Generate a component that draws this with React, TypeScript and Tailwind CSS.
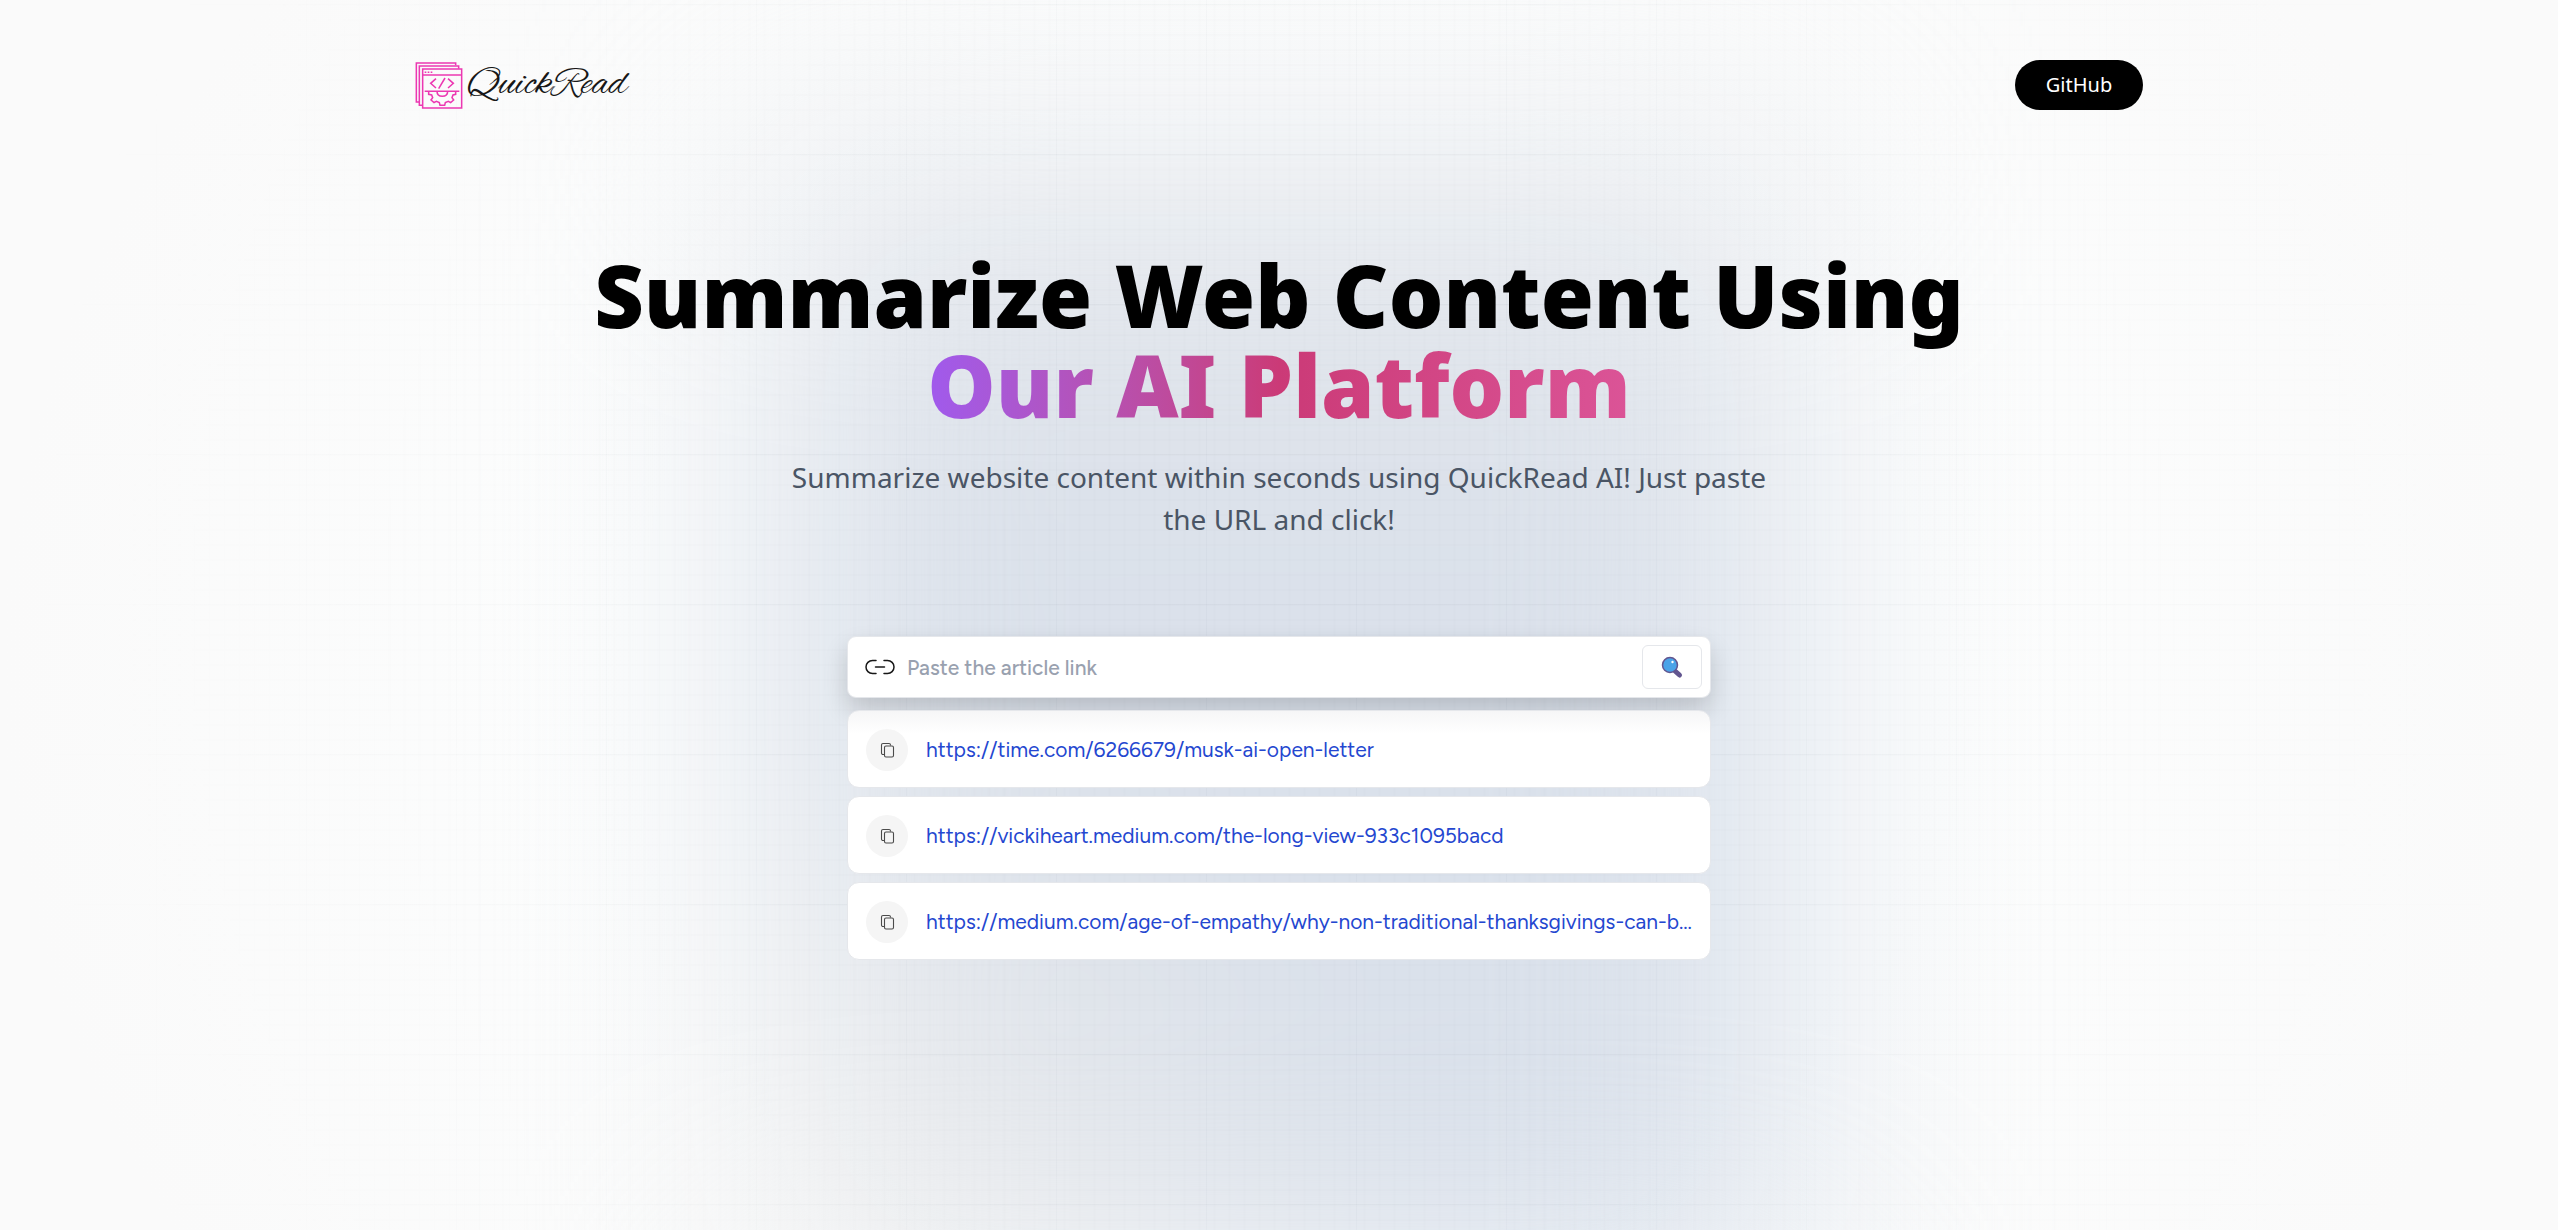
const links = [
  "https://time.com/6266679/musk-ai-open-letter",
  "https://vickiheart.medium.com/the-long-view-933c1095bacd",
  "https://medium.com/age-of-empathy/why-non-traditional-thanksgivings-can-be-better",
];

function LogoMark() {
  return (
    <svg viewBox="14 19 144 141" className="h-[47px] w-12" fill="none" stroke="#ec38b2" strokeWidth="4.6" aria-hidden="true">
      <path d="M28 139H18V22h118v7" />
      <path d="M37 149H27V31h118v8" />
      <path d="M37 40h117v117H37z" />
      <path d="M37 58h117" />
      <path d="M43 49.500h5M52 49.500h5M61 49.500h5" />
      <path d="M77 69 61 83l16 14M104 67 85 99M113 69l16 14-16 14" />
      <path d="M43 107h104" />
      <path d="M80 107c0 10 7 15 16 15s16-5 16-15" />
      <path d="M55 108v8l9 2 3 8-5 7 9 8 7-4 9 4 2 8h14l2-8 9-4 7 4 9-8-5-7 3-8 8-2v-8" />
    </svg>
  );
}

function LinkIcon() {
  return (
    <svg viewBox="0 0 30 16" className="h-4 w-[30px] shrink-0" fill="none" stroke="#171717" strokeWidth="1.500" strokeLinecap="round" aria-hidden="true">
      <path d="M11 1.500H7.500a6.500 6.500 0 0 0 0 13H11M19 1.500h3.500a6.500 6.500 0 0 1 0 13H19M10.500 8h9" />
    </svg>
  );
}

function CopyIcon() {
  return (
    <svg viewBox="0 0 16 16" className="size-4" fill="none" stroke="#4b4b4b" strokeWidth="1.100" strokeLinejoin="round" aria-hidden="true">
      <rect x="5.500" y="4" width="9" height="11" rx="1.500" />
      <path d="M5 12.500H4A1.500 1.500 0 0 1 2.500 11V3A1.500 1.500 0 0 1 4 1.500h6A1.500 1.500 0 0 1 11.500 3v.5" />
    </svg>
  );
}

function SearchIcon() {
  return (
    <svg viewBox="0 0 24 24" className="size-6" aria-hidden="true">
      <path d="m15 16 4.500 4" stroke="#62558f" strokeWidth="5" strokeLinecap="round" />
      <circle cx="10" cy="10" r="7.500" fill="#4aa3e8" stroke="#62558f" strokeWidth="1.500" />
      <circle cx="12.500" cy="7" r="1.200" fill="#fff" />
    </svg>
  );
}

function Backdrop() {
  return (
    <div className="pointer-events-none absolute inset-0 overflow-hidden" aria-hidden="true">
      <div className="absolute inset-0 bg-[radial-gradient(ellipse_50%_90%_at_50%_55%,#fcfdfd_50%,#fafafa_100%)]" />
      <div className="absolute inset-x-0 top-40 -bottom-20 mx-auto w-2/5 bg-[radial-gradient(circle_at_5%_95%,#eeeeee_0%,transparent_40%),linear-gradient(to_bottom,#e4e7ec,#dae1eb_40%)] blur-[120px]" />
      <div className="absolute inset-0 bg-[linear-gradient(to_right,rgba(30,50,70,0.024)_1px,transparent_1px),linear-gradient(to_bottom,rgba(30,50,70,0.024)_1px,transparent_1px),linear-gradient(to_right,rgba(30,50,70,0.009)_2px,transparent_2px),linear-gradient(to_bottom,rgba(30,50,70,0.009)_2px,transparent_2px)] bg-[size:150px_150px,150px_150px,15px_15px,15px_15px] bg-[position:calc(50%+2px)_4px] mask-[radial-gradient(ellipse_50%_110%_at_50%_50%,black_40%,transparent_100%)]" />
    </div>
  );
}

export default function App() {
  return (
    <main className="relative flex min-h-screen flex-col items-center bg-[#fafafa] px-6 font-['Noto_Sans',sans-serif] text-black">
      <Backdrop />
      <header className="relative flex w-full max-w-[1728px] items-center justify-between pt-[60px]">
        <div className="flex items-center gap-1">
          <LogoMark />
          <span className="font-['Alex_Brush','Great_Vibes',cursive] text-[40px] leading-10 text-neutral-900">QuickRead</span>
        </div>
        <button type="button" className="h-[50px] w-32 rounded-full bg-black text-xl text-white">
          GitHub
        </button>
      </header>

      <section className="relative mt-[140px] flex w-full flex-col items-center text-center">
        <h1 className="text-[86px] leading-[90px] font-black">
          Summarize Web Content Using
          <br />
          <span className="bg-linear-to-r from-[#a05aed] via-[#cb3a77] to-[#db5497] bg-clip-text text-transparent">Our AI Platform</span>
        </h1>
        <h2 className="mt-[26px] max-w-[1008px] text-[28px] leading-[42px] text-gray-600">
          Summarize website content within seconds using QuickRead AI! Just paste the URL and click!
        </h2>
      </section>

      <section className="relative mt-24 flex w-full max-w-[864px] flex-col font-['Figtree','Inter',sans-serif] text-[21px]">
        <form className="flex h-[62px] items-center rounded-[9px] border border-gray-200 bg-white pr-2 pl-[17px] shadow-[0_12px_24px_rgba(0,0,0,0.16)]" onSubmit={(e) => e.preventDefault()}>
          <LinkIcon />
          <input
            type="url"
            aria-label="Article link"
            placeholder="Paste the article link"
            className="h-full min-w-0 flex-1 bg-transparent px-3 font-medium outline-none placeholder:text-gray-400"
          />
          <button type="submit" aria-label="Summarize" className="flex h-11 w-15 items-center justify-center rounded-md border border-gray-200">
            <SearchIcon />
          </button>
        </form>
        <ul className="mt-3 flex flex-col gap-2">
          {links.map((link, i) => (
            <li
              key={link}
              className={
                "flex h-[78px] items-center gap-[18px] rounded-xl border border-gray-200 px-[18px] pt-0.5 " +
                (i === 0 ? "bg-linear-to-b from-[#f6f6f7] to-white to-30%" : "bg-white")
              }
            >
              <button type="button" aria-label="Copy link" className="flex size-[42px] shrink-0 items-center justify-center rounded-full bg-neutral-100">
                <CopyIcon />
              </button>
              <a href={link} className="min-w-0 flex-1 truncate text-[#2447d0]">
                {link}
              </a>
            </li>
          ))}
        </ul>
      </section>
    </main>
  );
}
